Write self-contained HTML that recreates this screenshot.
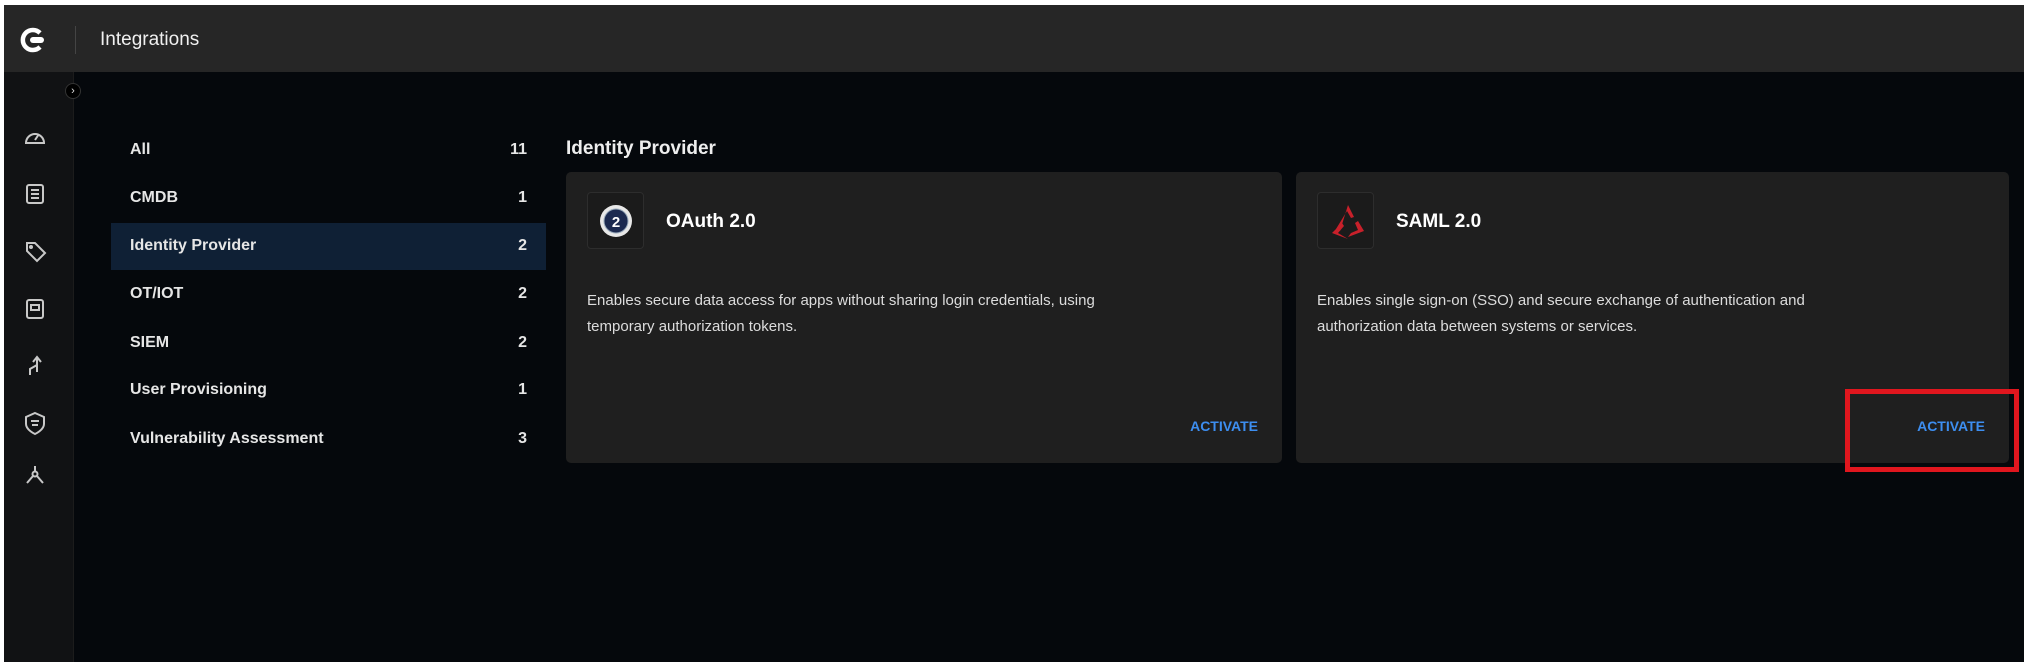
<!DOCTYPE html>
<html><head><meta charset="utf-8"><style>
*{margin:0;padding:0;box-sizing:border-box}
body{width:2032px;height:664px;background:#fff;font-family:"Liberation Sans",sans-serif;position:relative;overflow:hidden;color:#e8e8e8}
.frame{position:absolute;left:4px;top:5px;width:2020px;height:657px;background:#05080c}
.top{position:absolute;left:4px;top:5px;width:2020px;height:67px;background:#262626}
.side{position:absolute;left:4px;top:72px;width:70px;height:590px;background:#111214;border-right:1px solid #1c1c1c}
.abs{position:absolute}
.cat{position:absolute;left:130px;font-size:16px;font-weight:600;color:#e6e6e6}
.cnt{position:absolute;left:505px;width:22px;text-align:right;font-size:16px;font-weight:600;color:#e6e6e6}
.card{position:absolute;top:172px;height:291px;background:#1f1f1f;border-radius:5px}
.ib{position:absolute;left:21px;top:20px;width:57px;height:57px;border:1px solid #2d2d2d;border-radius:4px;background:#1b1b1b}
.ttl{position:absolute;left:100px;top:39px;font-size:19px;font-weight:bold;color:#fff}
.desc{position:absolute;left:21px;top:116px;font-size:15px;line-height:26px;color:#dcdcdc}
.act{position:absolute;right:24px;top:246px;font-size:14px;font-weight:bold;color:#3d8ef0}
</style></head><body>
<div class="frame"></div>
<div class="top"></div>
<svg class="abs" style="left:18px;top:25px" width="30" height="30" viewBox="0 0 30 30"><path d="M22 8 A10 10 0 1 0 22 22" fill="none" stroke="#fff" stroke-width="4.5"/><rect x="12" y="12" width="14" height="6" rx="3" fill="#fff"/></svg>
<div class="abs" style="left:75px;top:26px;width:1px;height:28px;background:#444"></div>
<div class="abs" style="left:100px;top:29px;font-size:19px;color:#f0f0f0">Integrations</div>
<div class="side"></div>
<div class="abs" style="left:65px;top:83px;width:16px;height:16px;border-radius:50%;background:#000;border:1px solid #333;color:#ddd;font-size:11px;line-height:14px;text-align:center">›</div>
<svg class="abs" style="left:20px;top:122px" width="30" height="380" viewBox="0 0 30 380" fill="none" stroke="#c8c8c8" stroke-width="2">
<path d="M6 21 A9 9 0 1 1 24 21 Z"/><path d="M15 18 L19 12"/>
<rect x="7" y="63" width="16" height="18" rx="2"/><path d="M11 68h8M11 72h8M11 76h8"/>
<path d="M7 121 L7 129 L17 139 L25 131 L15 121 Z"/><circle cx="11" cy="125" r="1"/>
<rect x="7" y="178" width="16" height="18" rx="2"/><path d="M11 183h8v5h-8z"/>
<path d="M17 250 V236 M13 240 L17 235 L21 240 M17 243 L10 247 V253"/>
<path d="M15 291 L24 295 V302 C24 308 15 312 15 312 C15 312 6 308 6 302 V295 Z"/><path d="M11 299h8M12 303h6"/>
<circle cx="15" cy="352" r="2.5"/><path d="M15 344 V350 M13 354 L7 361 M17 354 L23 361"/>
</svg>
<div class="abs" style="left:111px;top:223px;width:435px;height:47px;background:#0f2035"></div>
<div class="cat" style="top:141px">All</div><div class="cnt" style="top:141px">11</div>
<div class="cat" style="top:189px">CMDB</div><div class="cnt" style="top:189px">1</div>
<div class="cat" style="top:237px">Identity Provider</div><div class="cnt" style="top:237px">2</div>
<div class="cat" style="top:285px">OT/IOT</div><div class="cnt" style="top:285px">2</div>
<div class="cat" style="top:334px">SIEM</div><div class="cnt" style="top:334px">2</div>
<div class="cat" style="top:381px">User Provisioning</div><div class="cnt" style="top:381px">1</div>
<div class="cat" style="top:430px">Vulnerability Assessment</div><div class="cnt" style="top:430px">3</div>
<div class="abs" style="left:566px;top:138px;font-size:19px;font-weight:bold;color:#eee">Identity Provider</div>
<div class="card" style="left:566px;width:716px">
<div class="ib"><svg width="57" height="57" viewBox="0 0 57 57"><circle cx="28" cy="28" r="16" fill="#e8e8e8"/><circle cx="28" cy="28" r="12" fill="#1c2a50" stroke="#9ab" stroke-width="1"/><text x="28" y="34" font-size="15" font-weight="bold" text-anchor="middle" fill="#fff" font-family="Liberation Sans">2</text></svg></div>
<div class="ttl">OAuth 2.0</div>
<div class="desc">Enables secure data access for apps without sharing login credentials, using<br>temporary authorization tokens.</div>
<div class="act">ACTIVATE</div>
</div>
<div class="card" style="left:1296px;width:713px">
<div class="ib"><svg width="57" height="57" viewBox="0 0 57 57" fill="#c8202a"><path d="M30 12 L36 24 L33 25 L29 18 L18 36 L22 38 Z"/><path d="M40 28 L46 38 L30 44 L33 40 L40 37 L37 30 Z"/><path d="M14 40 L24 30 L26 33 L20 40 L30 46 Z"/></svg></div>
<div class="ttl">SAML 2.0</div>
<div class="desc">Enables single sign-on (SSO) and secure exchange of authentication and<br>authorization data between systems or services.</div>
<div class="act">ACTIVATE</div>
</div>
<div class="abs" style="left:1845px;top:389px;width:174px;height:83px;border:5px solid #e0161e"></div>
</body></html>
